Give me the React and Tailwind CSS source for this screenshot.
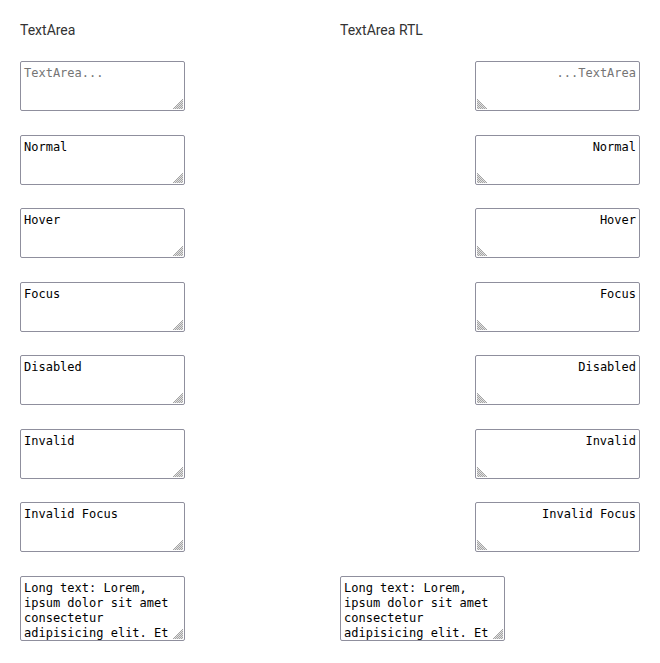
import React from "react";

const base =
  "block w-[165px] border border-[#8f8f9d] rounded-[2px] bg-white pl-[3px] pr-[3px] pt-[4px] pb-[2px] text-[12px] leading-[15px] text-black placeholder:text-[#757575] resize overflow-hidden outline-none [font-family:'DejaVu_Sans_Mono',monospace]";

const items = ["Normal", "Hover", "Focus", "Disabled", "Invalid", "Invalid Focus"];
const longText =
  "Long text: Lorem, ipsum dolor sit amet consectetur adipisicing elit. Et voluptatum, quibusdam dolores eaque iure quasi nihil.";

function Grip({ rtl }) {
  return (
    <svg
      width="11"
      height="11"
      viewBox="0 0 11 11"
      className={
        "absolute bottom-[2px] pointer-events-none bg-white " +
        (rtl ? "left-[2px] -scale-x-100" : "right-[2px]")
      }
    >
      {[1, 3, 5, 7, 9].map((x) => (
        <line key={x} x1={x} y1="11" x2="11" y2={x} stroke="#9a9a9a" strokeWidth="0.9" />
      ))}
      {[2, 4, 6, 8, 10].map((x) => (
        <line key={"b" + x} x1={x} y1="11" x2="11" y2={x} stroke="#d4d4d4" strokeWidth="0.7" />
      ))}
    </svg>
  );
}

function Box({ rtl, long, ...props }) {
  return (
    <div dir={rtl ? "rtl" : "ltr"} className="flex">
      <div className="relative">
        <textarea className={base + (long ? " h-[65px]" : " h-[50px]")} readOnly {...props} />
        <Grip rtl={rtl} />
      </div>
    </div>
  );
}

function Column({ title, rtl }) {
  return (
    <div className="w-[300px] flex flex-col">
      <div className="h-5 text-[14px] leading-5 text-[#333] [font-family:Roboto,sans-serif]">{title}</div>
      <div className="mt-[21px] flex flex-col gap-[23.5px]">
        <Box rtl={rtl} placeholder="TextArea..." />
        {items.map((t) => (
          <Box key={t} rtl={rtl} defaultValue={t} />
        ))}
        <Box long defaultValue={longText} />
      </div>
    </div>
  );
}

export default function App() {
  return (
    <div className="w-[660px] h-[663px] bg-white px-5 pt-5 flex gap-5">
      <Column title="TextArea" />
      <Column title="TextArea RTL" rtl />
    </div>
  );
}
